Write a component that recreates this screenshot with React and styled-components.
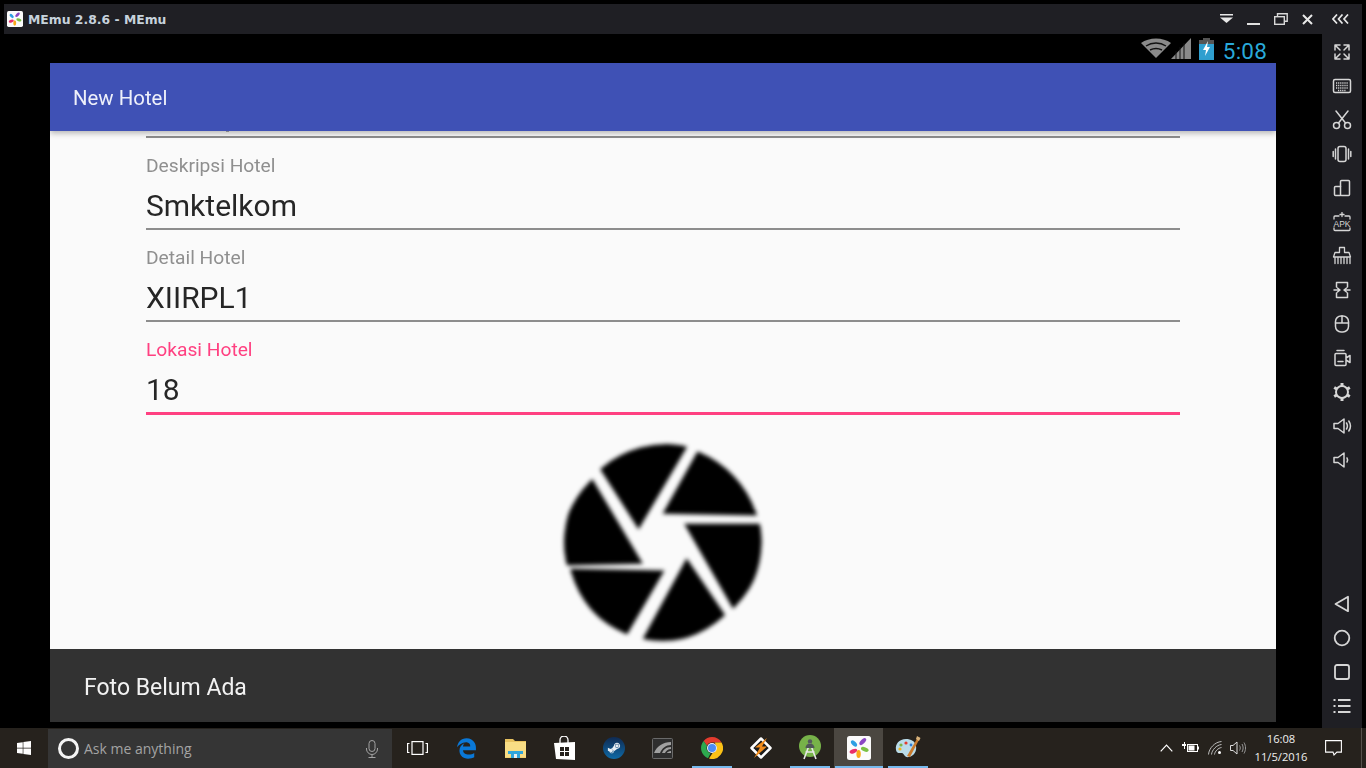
import React from "react";
import styled, { createGlobalStyle } from "styled-components";
import { FaWindows, FaSteamSymbol, FaEdgeLegacy } from "react-icons/fa6";

const Global = createGlobalStyle`
  html, body { margin: 0; padding: 0; background: #000; }
  body { width: 1366px; height: 768px; overflow: hidden; font-family: Roboto, "Liberation Sans", sans-serif; }
`;

const Screen = styled.div`
  width: 1366px; height: 768px; display: flex; flex-direction: column; background: #000; padding-top: 4px; box-sizing: border-box;
`;
const TitleBar = styled.header`
  height: 30px; margin: 0 4px 0 4px; background: #1f1f24; display: flex; align-items: center; padding-left: 3px; gap: 5px; flex: none;
`;
const AppTitle = styled.span`
  font: bold 12.4px "DejaVu Sans", sans-serif; color: #c6d2dc; margin-top: 1px;
`;
const WindowButtons = styled.div`
  margin-left: auto; display: flex; align-items: center; padding-right: 2px;
`;
const WindowButton = styled.span`
  width: ${p => p.$w || 27}px; height: 30px; display: flex; align-items: center; justify-content: center;
`;
const Middle = styled.div`
  height: 694px; flex: none; display: flex; padding-right: 4px;
`;
const Phone = styled.main`
  width: 1226px; margin-left: 50px; display: flex; flex-direction: column;
`;
const StatusBar = styled.div`
  height: 29px; flex: none; display: flex; align-items: center; justify-content: flex-end; padding-right: 9px;
`;
const Clock = styled.span`
  font: 400 22.5px Roboto, sans-serif; color: #29a9d9; margin-left: 9px; letter-spacing: .2px; position: relative; top: 2px;
`;
const AppBar = styled.div`
  height: 68px; flex: none; background: #3f51b5; color: #eef0fa; display: flex; align-items: center; padding-left: 23px;
  font: 400 20.4px Roboto, sans-serif; position: relative; z-index: 1; box-shadow: 0 2px 6px rgba(0,0,0,.3);
`;
const AppBarTitle = styled.span`
  filter: blur(.3px); position: relative; top: 1px;
`;
const Content = styled.div`
  height: 518px; flex: none; background: #fafafa; overflow: hidden; padding: 5px 96px 0; box-sizing: border-box; display: flex; flex-direction: column; position: relative;
`;
const Descender = styled.span`
  position: absolute; top: 0; left: 176px; width: 3px; height: 1px; background: #aaa;
`;
const Rule = styled.div`
  height: ${p => (p.$focus ? 3 : 2)}px; background: ${p => (p.$focus ? "#ff4081" : "#8d8d8d")}; filter: blur(.3px); flex: none;
`;
const Field = styled.div`
  padding-top: 18px; display: flex; flex-direction: column; flex: none;
`;
const Label = styled.label`
  font: 400 19.2px/20px Roboto, sans-serif; color: ${p => (p.$focus ? "#ff4081" : "#8f8f8f")}; filter: blur(.3px);
`;
const Value = styled.div`
  font: 400 30px/40px Roboto, sans-serif; color: #262626; margin: 10px 0 2px; filter: blur(.3px);
`;
const ShutterWrap = styled.div`
  display: flex; justify-content: center; margin-top: 28px; flex: none;
`;
const Shutter = styled.svg`
  width: 207px; height: 200px; filter: blur(1.9px); display: block; margin-left: 1px;
`;
const Snackbar = styled.div`
  height: 73px; flex: none; background: #323232; color: #f2f2f2; display: flex; align-items: center; padding-left: 34px;
  font: 400 23px Roboto, sans-serif;
`;
const SnackText = styled.span`
  filter: blur(.3px); position: relative; top: 2px;
`;
const Sidebar = styled.aside`
  width: 40px; margin-left: 46px; background: #1f1f24; display: flex; flex-direction: column; justify-content: space-between;
  padding: 1px 0 5px; box-sizing: border-box; flex: none;
`;
const SideGroup = styled.div`
  display: flex; flex-direction: column;
`;
const SideButton = styled.span`
  height: 34px; display: flex; align-items: center; justify-content: center;
`;
const SideSvg = styled.svg`
  width: 20px; height: 20px; fill: none; stroke: #d6d6d6; stroke-width: 1.5; stroke-linejoin: round; stroke-linecap: round; display: block;
`;
const Taskbar = styled.footer`
  height: 40px; flex: none; background: #26221d; display: flex; align-items: stretch;
`;
const StartButton = styled.span`
  width: 48px; display: flex; align-items: center; justify-content: center; color: #fff; font-size: 16px; flex: none;
`;
const SearchBox = styled.div`
  width: 344px; background: #353535; display: flex; align-items: center; flex: none; margin-top: 1px;
`;
const Cortana = styled.span`
  width: 15px; height: 15px; border: 3px solid #f4f4f4; border-radius: 50%; margin-left: 10px; flex: none;
`;
const SearchText = styled.span`
  font: 400 14px "Open Sans", sans-serif; color: #a3a3a3; margin-left: 5px; flex: 1;
`;
const MicWrap = styled.span`
  width: 16px; margin-right: 12px; display: flex; justify-content: center;
`;
const TaskItems = styled.div`
  display: flex; margin-left: 1px;
`;
const TaskItem = styled.span`
  width: 49px; display: flex; align-items: center; justify-content: center; position: relative; flex: none;
  background: ${p => (p.$active ? "#4b4741" : "transparent")};
  &::after {
    content: ""; position: absolute; bottom: 0; height: 2px; background: #76b9ed;
    left: ${p => (p.$active ? 1 : 5)}px; right: ${p => (p.$active ? 0 : 4)}px;
    display: ${p => (p.$open || p.$active ? "block" : "none")};
  }
`;
const EdgeGlyph = styled(FaEdgeLegacy)`
  color: #0a78d7; font-size: 21px;
`;
const SteamBadge = styled.span`
  width: 22px; height: 22px; border-radius: 50%; background: linear-gradient(#0f2a52, #0f6aa6); color: #e8eef4; display: flex;
  align-items: center; justify-content: center; font-size: 14px;
`;
const Tray = styled.div`
  margin-left: auto; display: flex; align-items: center; color: #fff;
`;
const TrayIcon = styled.span`
  width: ${p => p.$w}px; display: flex; justify-content: center;
`;
const TrayClock = styled.div`
  width: 60px; font: 400 11.2px/18px "Open Sans", sans-serif; color: #f0f0f0; text-align: center; margin-left: 3px; white-space: nowrap;
`;
const DesktopEdge = styled.span`
  width: 1px; background: #55514c; margin: 0 4px 0 6px; align-self: stretch;
`;

const MEmuLogo = ({ size }) => (
  <svg width={size} height={size} viewBox="0 0 24 24">
    <rect width="24" height="24" rx="2.5" fill="#fbfbfb" />
    <ellipse cx="7" cy="7.5" rx="3.8" ry="2.1" fill="#2e9fe3" transform="rotate(45 7 7.5)" />
    <ellipse cx="15.8" cy="5.6" rx="4.3" ry="2.1" fill="#8a47c4" transform="rotate(-45 15.8 5.6)" />
    <ellipse cx="6.4" cy="15.2" rx="4" ry="2.1" fill="#ea2e6b" transform="rotate(-20 6.4 15.2)" />
    <ellipse cx="17.8" cy="13.4" rx="4" ry="2.1" fill="#7ac143" transform="rotate(20 17.8 13.4)" />
    <ellipse cx="11.6" cy="18" rx="2.2" ry="4" fill="#fba919" />
  </svg>
);

const side = {
  expand: <><path d="M3 3l5 5M3 3h5M3 3v5M17 3l-5 5M17 3h-5M17 3v5M3 17l5-5M3 17h5M3 17v-5M17 17l-5-5M17 17h-5M17 17v-5" /></>,
  keyboard: <><rect x="1.5" y="3.5" width="17" height="13" rx="1.5" /><path d="M4 7h12M4 9.5h12M4 12h12M6 14.5h8" strokeDasharray="1.2 .9" strokeLinecap="butt" strokeWidth="1.7" /></>,
  scissors: <><circle cx="4.5" cy="15.5" r="3" /><circle cx="15.5" cy="15.5" r="3" /><path d="M6.5 13L16 1M13.5 13L4 1" /></>,
  shake: <><rect x="6" y="2.5" width="8" height="15" rx="2" /><path d="M3.5 5v10M16.5 5v10M1.2 7.5v5M18.8 7.5v5" /></>,
  rotate: <><rect x="8.5" y="2.5" width="9" height="15" rx="1" /><path d="M8.5 8.5H3.5a1 1 0 0 0-1 1v7a1 1 0 0 0 1 1h5" /></>,
  apk: <>
    <path d="M10 .5v4M8 2.5h4M7 4H3a1 1 0 0 0-1 1v2M13 4h4a1 1 0 0 1 1 1v2M2 16v1.5a1 1 0 0 0 1 1h14a1 1 0 0 0 1-1V16" strokeWidth="1.3" />
    <text x="10" y="15" fontSize="8.5" fontFamily="Liberation Sans" textAnchor="middle" stroke="none" fill="#d6d6d6">APK</text>
  </>,
  broom: <><path d="M7.5 1.5h5v5H17l1.500 4.500h-17L3 6.500h4.500zM3 11v6.500M6 11v6.500M9 11v6.500M12 11v6.500M15 11v6.500M18 11v6.500" strokeWidth="1.3" /></>,
  sync: <><path d="M4.5 7V2.5h11V7M4.5 13v4.500h11V13M2 10h6M5.5 8l2.500 2-2.500 2M18 10h-6M14.500 8L12 10l2.500 2" /></>,
  mouse: <><rect x="3.5" y="2" width="13" height="16" rx="5.5" /><path d="M3.5 9h13M10 2v7" /></>,
  video: <><path d="M5 2.5h7M3 6.500a1 1 0 0 1 1-1h9a1 1 0 0 1 1 1v10a1 1 0 0 1-1 1H4a1 1 0 0 1-1-1zM14 10l4-2.500v7L14 12M6 13.500h5" /></>,
  gear: <><circle cx="10" cy="10" r="6" strokeWidth="2" /><path d="M10 1v3M10 16v3M2.200 5.500l2.600 1.500M15.200 13l2.600 1.500M2.200 14.500l2.600-1.500M15.200 7l2.600-1.500" strokeWidth="3" strokeLinecap="butt" /></>,
  volUp: <><path d="M2 7.500h4L12 3v14l-6-4.500H2zM14.500 7c1.200 2 1.200 4 0 6M16.800 5c2 3 2 7 0 10" /></>,
  volDown: <><path d="M2 7.500h4L12 3v14l-6-4.500H2zM15 8c.8 1.300.8 2.700 0 4" /></>,
  back: <><path d="M3.5 10L16 2.800v14.400z" strokeWidth="1.8" /></>,
  home: <><circle cx="10" cy="10" r="7.3" strokeWidth="1.8" /></>,
  square: <><rect x="3" y="3" width="14" height="14" rx="2" strokeWidth="1.8" /></>,
  list: <><path d="M1.5 4h2M1.5 10h2M1.5 16h2M6 4h12.500M6 10h12.500M6 16h12.500" strokeWidth="2" strokeLinecap="butt" /></>,
};
const topIcons = ["expand", "keyboard", "scissors", "shake", "rotate", "apk", "broom", "sync", "mouse", "video", "gear", "volUp", "volDown"];
const bottomIcons = ["back", "home", "square", "list"];

const Chrome = () => (
  <svg width="22" height="22" viewBox="0 0 22 22">
    <path d="M11 0a11 11 0 0 1 9.500 5.500H11a5.500 5.500 0 0 0-5 3.200L2.600 3.900A11 11 0 0 1 11 0z" fill="#e33b2e" />
    <path d="M2.600 3.900L6 8.700a5.500 5.500 0 0 0 3.600 7.600L7 21.200A11 11 0 0 1 2.600 3.900z" fill="#2da94f" />
    <path d="M20.500 5.500A11 11 0 0 1 8 21.600l3.600-5.600a5.500 5.500 0 0 0 3.600-7.600l-1.600-2.900z" fill="#fbc116" />
    <circle cx="11" cy="11" r="5" fill="#f4f4f4" /><circle cx="11" cy="11" r="4" fill="#4c8bf5" />
  </svg>
);
const Explorer = () => (
  <svg width="22" height="20" viewBox="0 0 22 20">
    <path d="M0 1h8l2 2h11v17H0z" fill="#e8c25f" /><rect x="0" y="4" width="21" height="15.5" fill="#f8dd85" />
    <rect x="3" y="13" width="15" height="3" fill="#30a6dd" /><rect x="6" y="15" width="9" height="5" fill="#30a6dd" />
    <rect x="9" y="16" width="3" height="4" fill="#e9edf0" />
  </svg>
);
const Store = () => (
  <svg width="21" height="24" viewBox="0 0 21 24">
    <path d="M6 7V4a4 4 0 0 1 8 0v3" stroke="#fff" strokeWidth="1.3" fill="none" />
    <path d="M0 7l21-1v18l-19-1z" fill="#fff" />
    <path d="M6 11h4v4H6zM11 11h4v4h-4zM6 16h4v4H6zM11 16h4v4h-4z" fill="#26221d" />
  </svg>
);
const Nvidia = () => (
  <svg width="21" height="21" viewBox="0 0 21 21">
    <rect x=".5" y=".5" width="20" height="20" rx="1" fill="#2e2e2e" stroke="#6a6a6a" strokeWidth="1" />
    <path d="M2 15C5 8 11 4 19 4v3C14 7 10 10 8 15zM10 15c1-3 4-6 9-6v2c-3 0-5 2-6 4zM15 15c0-1 2-2 4-2v2z" fill="#a0a0a0" />
  </svg>
);
const Winamp = () => (
  <svg width="24" height="24" viewBox="0 0 24 24">
    <path d="M12 2.5l9.500 9.500-9.500 9.500L2.500 12z" fill="#1c1c1c" stroke="#fff" strokeWidth="2.5" strokeLinejoin="round" />
    <path d="M18 2L6 11.500h5L5 22l13-11.500h-5z" fill="#f28c1c" />
  </svg>
);
const AndroidStudio = () => (
  <svg width="24" height="26" viewBox="0 0 24 26">
    <circle cx="12" cy="11" r="11" fill="#77b249" />
    <path d="M12 8L6 24M12 8l6 16M7.500 17h9" stroke="#e8e8e8" strokeWidth="1.6" fill="none" />
    <path d="M7.500 13a4.500 4.500 0 0 1 9 0z" fill="#4f5558" />
    <circle cx="12" cy="6.5" r="2.2" fill="#55595c" />
  </svg>
);
const Palette = () => (
  <svg width="26" height="24" viewBox="0 0 26 24">
    <path d="M11 3C4 3 0 8 1 14c.6 4 4 3 6 3s2 5 7 4 8-6 7-11-5-7-10-7z" fill="#b9dbe9" />
    <circle cx="6" cy="9" r="1.6" fill="#7ab648" /><circle cx="11" cy="7" r="1.6" fill="#e33b2e" />
    <circle cx="5" cy="13" r="1.6" fill="#f2b51b" /><circle cx="16" cy="9" r="1.4" fill="#2e7cd6" />
    <path d="M23 1l2 1-10 19-3-1z" fill="#c87a2d" /><path d="M22 0l3.500 2-1.500 3-3-2z" fill="#d8b27a" />
  </svg>
);

const blades = [
  "M160 120A296 296 0 0 1 400 55L265 285Z",
  "M445 75A296 296 0 0 1 610 250L350 245Z",
  "M415 290H635A296 296 0 0 1 550 525Z",
  "M410 400L515 555A296 296 0 0 1 285 630Z",
  "M70 425L330 430L225 610A296 296 0 0 1 70 425Z",
  "M125 160L265 395L40 400A296 296 0 0 1 125 160Z",
];

const App = () => (
  <Screen>
    <Global />
    <TitleBar>
      <MEmuLogo size={16} />
      <AppTitle>MEmu 2.8.6 - MEmu</AppTitle>
      <WindowButtons>
        <WindowButton>
          <svg width="14" height="10" viewBox="0 0 14 10"><path d="M0 0h13v1.500H0z" fill="#e8e8e8" /><path d="M0 3.500h13L6.500 9z" fill="#e8e8e8" /></svg>
        </WindowButton>
        <WindowButton>
          <svg width="14" height="12" viewBox="0 0 14 12"><path d="M0 10h13v2H0z" fill="#e0e0e0" /></svg>
        </WindowButton>
        <WindowButton>
          <svg width="14" height="12" viewBox="0 0 14 12" fill="none" stroke="#d8d8d8" strokeWidth="1.4"><rect x=".7" y="3.7" width="9.6" height="7.6" /><path d="M3.5 3V.8h9.700v7.400h-2.600" /></svg>
        </WindowButton>
        <WindowButton>
          <svg width="11" height="11" viewBox="0 0 11 11" stroke="#e8e8e8" strokeWidth="2"><path d="M1 1l9 9M10 1l-9 9" /></svg>
        </WindowButton>
        <WindowButton $w={39}>
          <svg width="18" height="10" viewBox="0 0 18 10" fill="none" stroke="#e8e8e8" strokeWidth="1.7"><path d="M5 .5L1 5l4 4.500M10.500.5L6.500 5l4 4.500M16 .5L12 5l4 4.500" /></svg>
        </WindowButton>
      </WindowButtons>
    </TitleBar>
    <Middle>
      <Phone>
        <StatusBar>
          <svg width="30" height="22" viewBox="0 0 30 22"><path d="M15 20L0 5C8-1 22-1 30 5z" fill="#8a8a8a" /><path d="M5 8C11 4 19 4 25 8M9 12c4-2 8-2 12 0" stroke="#111" strokeWidth="1.4" fill="none" /></svg>
          <svg width="20" height="21" viewBox="0 0 20 21"><path d="M0 21L20 0v21z" fill="#8a8a8a" /><path d="M5 13v8M9 9v12M13 5v16" stroke="#111" strokeWidth="1" /></svg>
          <svg width="15" height="22" viewBox="0 0 15 22" style={{ marginLeft: 8 }}><path d="M4 0h7v2h4v20H0V2h4z" fill="#555" /><rect y="6" width="15" height="16" fill="#2f9fcf" /><path d="M9 3L4 12h3l-1 6 5-9H8z" fill="#fff" /></svg>
          <Clock>5:08</Clock>
        </StatusBar>
        <AppBar><AppBarTitle>New Hotel</AppBarTitle></AppBar>
        <Content>
          <Descender />
          <Rule />
          <Field>
            <Label>Deskripsi Hotel</Label>
            <Value>Smktelkom</Value>
            <Rule />
          </Field>
          <Field>
            <Label>Detail Hotel</Label>
            <Value>XIIRPL1</Value>
            <Rule />
          </Field>
          <Field>
            <Label $focus>Lokasi Hotel</Label>
            <Value>18</Value>
            <Rule $focus />
          </Field>
          <ShutterWrap>
            <Shutter viewBox="30 40 620 600">
              <defs><clipPath id="lens"><circle cx="338" cy="338" r="296" /></clipPath></defs>
              <g clipPath="url(#lens)">
                {blades.map(d => <path key={d} d={d} fill="#000" stroke="#000" strokeWidth="15" strokeLinejoin="miter" />)}
              </g>
            </Shutter>
          </ShutterWrap>
        </Content>
        <Snackbar><SnackText>Foto Belum Ada</SnackText></Snackbar>
      </Phone>
      <Sidebar>
        <SideGroup>
          {topIcons.map(n => <SideButton key={n}><SideSvg viewBox="0 0 20 20">{side[n]}</SideSvg></SideButton>)}
        </SideGroup>
        <SideGroup>
          {bottomIcons.map(n => <SideButton key={n}><SideSvg viewBox="0 0 20 20">{side[n]}</SideSvg></SideButton>)}
        </SideGroup>
      </Sidebar>
    </Middle>
    <Taskbar>
      <StartButton><FaWindows /></StartButton>
      <SearchBox>
        <Cortana />
        <SearchText>Ask me anything</SearchText>
        <MicWrap>
          <svg width="14" height="18" viewBox="0 0 14 18" fill="none" stroke="#a3a3a3" strokeWidth="1"><rect x="4" y=".5" width="6" height="11" rx="3" /><path d="M1.500 8v1a5.500 5.500 0 0 0 11 0V8M7 14.500v3M3.500 17.500h7" /></svg>
        </MicWrap>
      </SearchBox>
      <TaskItems>
        <TaskItem>
          <svg width="21" height="14" viewBox="0 0 21 14" fill="none" stroke="#fff" strokeWidth="1.2"><rect x="5" y=".6" width="11" height="12.8" /><path d="M2.500 2.500H.6v9h1.900M18.500 2.500h1.900v9h-1.900" /></svg>
        </TaskItem>
        <TaskItem><EdgeGlyph /></TaskItem>
        <TaskItem><Explorer /></TaskItem>
        <TaskItem><Store /></TaskItem>
        <TaskItem><SteamBadge><FaSteamSymbol /></SteamBadge></TaskItem>
        <TaskItem><Nvidia /></TaskItem>
        <TaskItem $open><Chrome /></TaskItem>
        <TaskItem><Winamp /></TaskItem>
        <TaskItem $open><AndroidStudio /></TaskItem>
        <TaskItem $active><MEmuLogo size={24} /></TaskItem>
        <TaskItem $open><Palette /></TaskItem>
      </TaskItems>
      <Tray>
        <TrayIcon $w={24}>
          <svg width="13" height="8" viewBox="0 0 13 8" fill="none" stroke="#fff" strokeWidth="1.2"><path d="M.7 7.300L6.500 1.200l5.800 6.100" /></svg>
        </TrayIcon>
        <TrayIcon $w={24}>
          <svg width="17" height="12" viewBox="0 0 17 12"><path d="M0 2h2V0h1v2h1v2H3v3H2V4H0z" fill="#fff" /><rect x="5.500" y="2.500" width="10" height="7" fill="none" stroke="#fff" /><rect x="6.500" y="3.500" width="6" height="5" fill="#fff" /><rect x="16" y="4.500" width="1" height="3" fill="#fff" /></svg>
        </TrayIcon>
        <TrayIcon $w={26}>
          <svg width="14" height="14" viewBox="0 0 14 14" fill="none" stroke="#bdbdbd" strokeWidth="1"><path d="M.5 13.500C1 7 7 1 13.500.5M3.500 13.500c.4-4.500 5-9.500 10-10M6.500 13.500c.3-3 3.500-6.500 7-7" /><circle cx="11.500" cy="11.500" r="1.500" fill="#fff" stroke="none" /></svg>
        </TrayIcon>
        <TrayIcon $w={20}>
          <svg width="16" height="14" viewBox="0 0 16 14" fill="none" stroke="#ddd" strokeWidth="1"><path d="M.5 4.500h2.500L7 1v12L3 9.500H.5z" /><path d="M9.500 4.500c1 1.500 1 3.500 0 5M12 3c1.500 2.500 1.500 5.500 0 8M14 1.500c2 3.300 2 7.700 0 11" stroke="#999" /></svg>
        </TrayIcon>
        <TrayClock>16:08<br />11/5/2016</TrayClock>
        <TrayIcon $w={44}>
          <svg width="17" height="16" viewBox="0 0 17 16" fill="none" stroke="#fff" strokeWidth="1.1"><path d="M.6.6h15.800v11.500h-4.500L9 15l-1-2.900H.6z" /></svg>
        </TrayIcon>
        <DesktopEdge />
      </Tray>
    </Taskbar>
  </Screen>
);

export default App;
